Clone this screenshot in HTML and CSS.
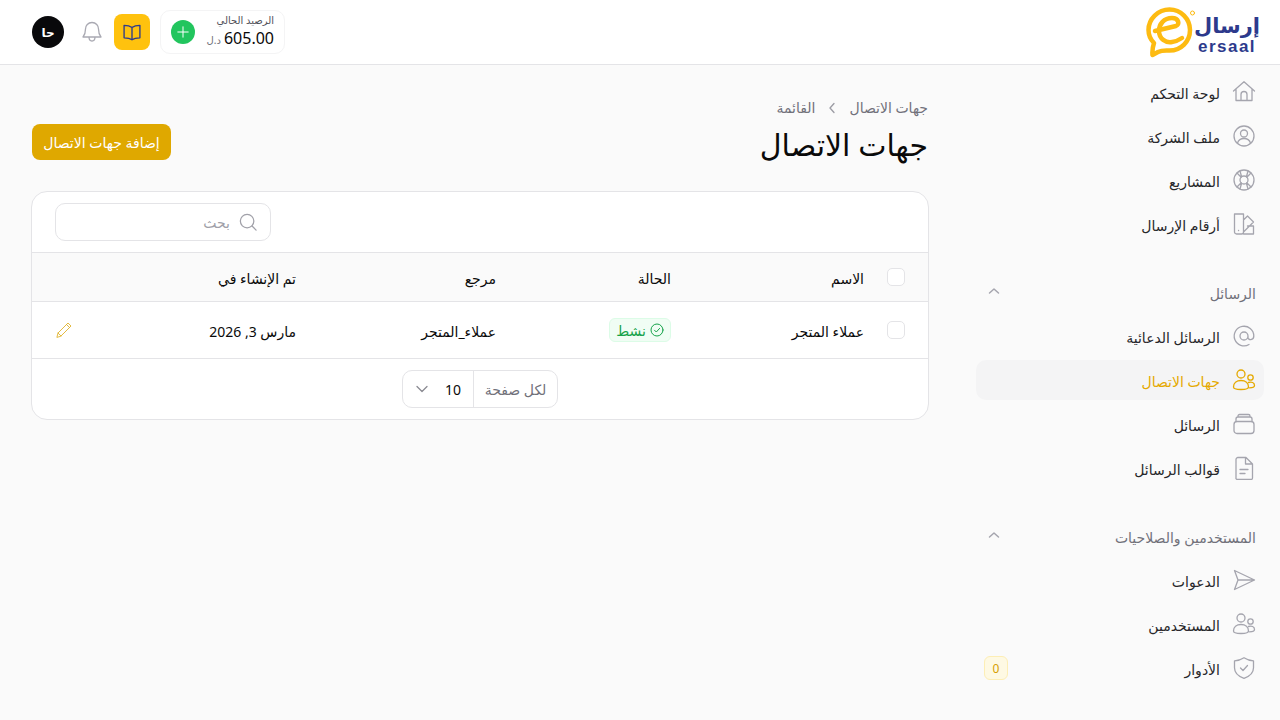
FILE: index.html
```html
<!DOCTYPE html>
<html lang="ar" dir="rtl">
  <head>
    <meta charset="UTF-8" />
    <meta name="viewport" content="width=device-width, initial-scale=1.0" />
    <title>جهات الاتصال</title>
    <link rel="stylesheet" href="styles.css">
  </head>
  <body>
    <header class="topbar">
      <div class="logo">
        <svg class="logo-mark" width="50" height="52" viewBox="0 0 50 52" fill="none" stroke="#fdbb12" stroke-linecap="round" stroke-linejoin="round">
          <path d="M8 37C4 33 2.500 29 2.500 24 2.500 13 12 3.500 23.500 3.500 35 3.500 44 13 44 24 44 35.500 35 44.500 23.500 44.500 19 44.500 16 44 12 46L6.500 49C6 44 7 40 8 37Z" stroke-width="4.500"/>
          <path d="M9 25 30 20C34 18.500 33 12 26 12 18 12 13 18 13 25 13 33 20 37 26 36 30 35.500 33 34 36 32" stroke-width="4.500"/>
          <circle cx="46.500" cy="7" r="2" stroke-width="1"/>
        </svg>
        <div class="logo-text">
          <span class="logo-ar">إرسال</span>
          <span class="logo-en">ersaal</span>
        </div>
      </div>
      <div class="top-actions">
        <div class="balance">
          <div class="balance-text">
            <div class="balance-label">الرصيد الحالي</div>
            <div class="balance-row"><span class="balance-value">605.00</span><span class="balance-cur">د.ل</span></div>
          </div>
          <span class="balance-add">
            <svg width="12" height="12" viewBox="0 0 12 12" fill="none" stroke="#fff" stroke-width="1" stroke-linecap="round"><path d="M6 .8v10.400M.8 6h10.400"/></svg>
          </span>
        </div>
        <span class="book-btn">
          <svg width="20" height="20" viewBox="0 0 24 24" fill="none" stroke="#2d3a8c" stroke-width="1.600" stroke-linecap="round" stroke-linejoin="round"><path d="M12 6.500C10 5 7 4 2.500 4v15C7 19 10 19.800 12 21.300 14 19.800 17 19 21.500 19V4C17 4 14 5 12 6.500ZM12 6.500v14.800"/></svg>
        </span>
        <svg class="bell" width="24" height="24" viewBox="0 0 24 24" fill="none" stroke="#a9a9b2" stroke-width="1.300" stroke-linecap="round" stroke-linejoin="round"><path d="M12 2.500c-4 0-6.500 3-6.500 6.500 0 4.500-.8 6-2.500 8h18c-1.700-2-2.500-3.500-2.500-8 0-3.500-2.500-6.500-6.500-6.500ZM9 17c0 2.500 1.200 4 3 4s3-1.500 3-4"/></svg>
        <span class="avatar">حا</span>
      </div>
    </header>

    <div class="layout">
      <nav class="sidebar">
        <a class="nav-item">
          <svg class="ico" viewBox="0 0 24 24"><path d="M1.500 11 12 1.800 22.500 11M4 9v11.500h16V9M9 20.500V14.500a3 3 0 0 1 6 0v6"/></svg>
          <span>لوحة التحكم</span>
        </a>
        <a class="nav-item">
          <svg class="ico" viewBox="0 0 24 24"><circle cx="12" cy="12" r="10"/><circle cx="12" cy="9.500" r="3.500"/><path d="M5.500 19c1-3 3.500-4.500 6.500-4.500s5.500 1.500 6.500 4.500"/></svg>
          <span>ملف الشركة</span>
        </a>
        <a class="nav-item">
          <svg class="ico" viewBox="0 0 24 24"><circle cx="12" cy="12" r="10"/><circle cx="12" cy="12" r="4"/><path d="M5 5l4.200 4.200M19 5l-4.200 4.200M5 19l4.200-4.200M19 19l-4.200-4.200M8 3l1.500 5.500M16 3l-1.500 5.500M8 21l1.500-5.500M16 21l-1.500-5.500"/></svg>
          <span>المشاريع</span>
        </a>
        <a class="nav-item">
          <svg class="ico" viewBox="0 0 24 24"><path d="M2.500 2h9v18a2 2 0 0 1-2 2h-5a2 2 0 0 1-2-2ZM11.500 8l4-4 6 6-10 10M11.500 22h10V14h-6M6.500 18.500h.1"/></svg>
          <span>أرقام الإرسال</span>
        </a>

        <div class="nav-head">
          <span>الرسائل</span>
          <svg class="chev" width="14" height="14" viewBox="0 0 14 14"><path d="M2.500 9 7 5l4.500 4"/></svg>
        </div>
        <a class="nav-item">
          <svg class="ico" viewBox="0 0 24 24"><path d="M16 12a4 4 0 1 1-8 0 4 4 0 0 1 8 0Zm0 0v1.500c0 3 5.800 3 5.800-1.500A9.800 9.800 0 1 0 17 20.500"/></svg>
          <span>الرسائل الدعائية</span>
        </a>
        <a class="nav-item active">
          <svg class="ico" viewBox="0 0 24 24"><circle cx="9" cy="6" r="4"/><circle cx="18.500" cy="9.500" r="2.700"/><path d="M1.500 19c0-4 3-6.500 7.500-6.500S16.500 15 16.500 19c0 1.500-2 2.500-7.500 2.500S1.500 20.500 1.500 19ZM16.500 14.500c3-.8 6-.2 6 3 0 1.500-1.500 2.200-5 2.300"/></svg>
          <span>جهات الاتصال</span>
        </a>
        <a class="nav-item">
          <svg class="ico" viewBox="0 0 24 24"><rect x="2" y="9.500" width="20" height="12" rx="3"/><path d="M4 9.500V7a2 2 0 0 1 2-2h12a2 2 0 0 1 2 2v2.500M6 5V4a1.500 1.500 0 0 1 1.500-1.500h9A1.500 1.500 0 0 1 18 4v1"/></svg>
          <span>الرسائل</span>
        </a>
        <a class="nav-item">
          <svg class="ico" viewBox="0 0 24 24"><path d="M4 3.500a2 2 0 0 1 2-2h8l6.500 6.500v14a1.500 1.500 0 0 1-1.500 1.500H5.500A1.500 1.500 0 0 1 4 21.500ZM13.500 1.500V8h7M8 13.500h8M8 17.500h5"/></svg>
          <span>قوالب الرسائل</span>
        </a>

        <div class="nav-head">
          <span>المستخدمين والصلاحيات</span>
          <svg class="chev" width="14" height="14" viewBox="0 0 14 14"><path d="M2.500 9 7 5l4.500 4"/></svg>
        </div>
        <a class="nav-item">
          <svg class="ico" viewBox="0 0 24 24"><path d="M2.500 2.500l20 9.500-20 9.500 3.500-9.500ZM6 12h16.500"/></svg>
          <span>الدعوات</span>
        </a>
        <a class="nav-item">
          <svg class="ico" viewBox="0 0 24 24"><circle cx="9" cy="6" r="4"/><circle cx="18.500" cy="9.500" r="2.700"/><path d="M1.500 19c0-4 3-6.500 7.500-6.500S16.500 15 16.500 19c0 1.500-2 2.500-7.500 2.500S1.500 20.500 1.500 19ZM16.500 14.500c3-.8 6-.2 6 3 0 1.500-1.500 2.200-5 2.300"/></svg>
          <span>المستخدمين</span>
        </a>
        <a class="nav-item">
          <svg class="ico" viewBox="0 0 24 24"><path d="M12 1.800c3 2 6 3 9.500 3v7c0 5-3.500 8.500-9.500 10.500-6-2-9.500-5.500-9.500-10.500v-7c3.500 0 6.500-1 9.500-3ZM8.500 12l2.500 2.500 4.500-5"/></svg>
          <span>الأدوار</span>
          <span class="count">0</span>
        </a>
      </nav>

      <main class="content">
        <div class="crumbs">
          <span>جهات الاتصال</span>
          <svg width="14" height="14" viewBox="0 0 14 14" fill="none" stroke="#9b9ba3" stroke-width="1.300" stroke-linecap="round" stroke-linejoin="round"><path d="M9 2.500 5 7l4 4.500"/></svg>
          <span>القائمة</span>
        </div>
        <div class="page-head">
          <h1>جهات الاتصال</h1>
          <button class="add-btn">إضافة جهات الاتصال</button>
        </div>

        <section class="card">
          <div class="toolbar">
            <div class="search">
              <svg width="18" height="18" viewBox="0 0 20 20" fill="none" stroke="#a1a1a9" stroke-width="1.400" stroke-linecap="round"><circle cx="9" cy="9" r="7.500"/><path d="m14.500 14.500 4.500 4.500"/></svg>
              <span>بحث</span>
            </div>
          </div>
          <div class="row row-head">
            <div class="c-check"><span class="check"></span></div>
            <div class="c-name">الاسم</div>
            <div class="c-status">الحالة</div>
            <div class="c-ref">مرجع</div>
            <div class="c-date">تم الإنشاء في</div>
            <div class="c-edit"></div>
          </div>
          <div class="row row-body">
            <div class="c-check"><span class="check"></span></div>
            <div class="c-name">عملاء المتجر</div>
            <div class="c-status">
              <span class="badge">
                <svg width="14" height="14" viewBox="0 0 14 14" fill="none" stroke="#16a34a" stroke-linecap="round" stroke-linejoin="round"><circle cx="7" cy="7" r="6"/><path d="m4.500 7.200 1.800 1.800 3.300-3.600"/></svg>
                نشط
              </span>
            </div>
            <div class="c-ref">عملاء_المتجر</div>
            <div class="c-date">مارس 3, 2026</div>
            <div class="c-edit">
              <svg width="16" height="16" viewBox="0 0 16 16" fill="none" stroke="#e0b32e" stroke-width=".9" stroke-linecap="round" stroke-linejoin="round"><path d="M1 15l1-4L12 1l3 3L5 14ZM2 11l3 3M10.500 2.500l3 3"/></svg>
            </div>
          </div>
          <div class="pager">
            <div class="per-page">
              <span class="per-label">لكل صفحة</span>
              <span class="per-value">10
                <svg width="14" height="14" viewBox="0 0 14 14" fill="none" stroke="#8b8b93" stroke-width="1.300" stroke-linecap="round" stroke-linejoin="round"><path d="M2 4.500 7 9.500l5-5"/></svg>
              </span>
            </div>
          </div>
        </section>
      </main>
    </div>
  </body>
</html>
```

FILE: styles.css
```css
* {
  margin: 0;
  padding: 0;
  box-sizing: border-box;
}
html,
body {
  height: 100%;
  overflow: hidden;
}
body {
  background: #fafafa;
  color: #0a0a0a;
  font-family: "Noto Sans", "DejaVu Sans", sans-serif;
  font-size: 14px;
}

/* top bar */
.topbar {
  height: 65px;
  background: #fff;
  border-bottom: 1px solid #e4e4e7;
  display: flex;
  align-items: center;
  justify-content: space-between;
  padding: 0 24px 0 32px;
}
.logo {
  display: flex;
  align-items: center;
  direction: ltr;
  gap: 2px;
}
.logo-text {
  display: flex;
  flex-direction: column;
  align-items: center;
  width: 58px;
  color: #2d3a8c;
  font-weight: 700;
  line-height: 1;
}
.logo-ar {
  font-size: 21px;
  line-height: 28px;
}
.logo-en {
  font-family: "Liberation Sans", sans-serif;
  font-size: 17px;
  line-height: 15px;
  letter-spacing: 1.500px;
}
.top-actions {
  display: flex;
  align-items: center;
}
.balance {
  width: 125px;
  height: 44px;
  background: #fff;
  border: 1px solid #f4f4f5;
  border-radius: 10px;
  display: flex;
  align-items: center;
  justify-content: space-between;
  padding: 0 10px;
}
.balance-text {
  display: flex;
  flex-direction: column;
}
.balance-label {
  font-size: 10px;
  line-height: 14px;
  color: #52525b;
}
.balance-row {
  display: flex;
  align-items: baseline;
  gap: 3px;
  line-height: 22px;
}
.balance-value {
  font-size: 16px;
}
.balance-cur {
  font-size: 10px;
  color: #71717a;
}
.balance-add {
  width: 24px;
  height: 24px;
  border-radius: 50%;
  background: #22c55e;
  display: flex;
  align-items: center;
  justify-content: center;
}
.book-btn {
  width: 36px;
  height: 36px;
  margin-right: 10px;
  border-radius: 8px;
  background: #ffc20e;
  display: flex;
  align-items: center;
  justify-content: center;
}
.bell {
  margin: 0 10px;
}
.avatar {
  width: 32px;
  height: 32px;
  margin-right: 6px;
  border-radius: 50%;
  background: #09090b;
  color: #fff;
  font-size: 12px;
  font-weight: 700;
  display: flex;
  align-items: center;
  justify-content: center;
}

/* page */
.layout {
  display: flex;
  height: 655px;
}
.sidebar {
  width: 304px;
  flex-shrink: 0;
  padding: 7px 16px 0 0;
}
.nav-item {
  height: 40px;
  margin-bottom: 4px;
  padding: 0 8px;
  border-radius: 10px;
  display: flex;
  align-items: center;
  gap: 12px;
  color: #27272a;
  font-weight: 500;
}
.nav-item span:not(.count) {
  position: relative;
  top: 1px;
}
.nav-item.active {
  background: #f4f4f5;
  color: #e5a900;
}
.ico {
  width: 24px;
  height: 24px;
  flex-shrink: 0;
  fill: none;
  stroke: #a5a5ae;
  stroke-width: 1.300;
  stroke-linecap: round;
  stroke-linejoin: round;
}
.active .ico {
  stroke: #e5a900;
}
.count {
  margin-right: auto;
  width: 24px;
  height: 24px;
  border: 1px solid #fdeeb5;
  border-radius: 6px;
  background: #fef9e3;
  color: #d69e00;
  font-size: 12px;
  font-weight: 400;
  display: flex;
  align-items: center;
  justify-content: center;
}
.nav-head {
  height: 48px;
  margin-top: 22px;
  margin-bottom: 2px;
  padding: 0 8px 0 11px;
  display: flex;
  align-items: center;
  justify-content: space-between;
  color: #71717a;
}
.nav-head span {
  position: relative;
  top: 3px;
}
.chev {
  position: relative;
  top: 1px;
  fill: none;
  stroke: #a5a5ae;
  stroke-width: 1.500;
  stroke-linecap: round;
  stroke-linejoin: round;
}

/* main */
.content {
  flex: 1;
  padding: 33px 48px 0 32px;
}
.crumbs {
  display: flex;
  align-items: center;
  gap: 10px;
  color: #71717a;
  line-height: 20px;
}
.page-head {
  display: flex;
  align-items: flex-start;
  justify-content: space-between;
  margin-top: 6px;
  height: 67px;
}
h1 {
  font-size: 30px;
  font-weight: 500;
  line-height: 44px;
  position: relative;
  top: -1px;
}
.add-btn {
  height: 36px;
  width: 139px;
  border: 0;
  border-radius: 8px;
  background: #dfa800;
  color: #fff;
  font: inherit;
  font-weight: 500;
}
.card {
  margin: 0 -1px;
  background: #fff;
  border: 1px solid #e4e4e7;
  border-radius: 16px;
}
.toolbar {
  height: 61px;
  padding: 11px 23px;
  display: flex;
  justify-content: flex-end;
  border-bottom: 1px solid #e4e4e7;
}
.search {
  width: 216px;
  height: 38px;
  border: 1px solid #e4e4e7;
  border-radius: 10px;
  padding: 0 13px 0 10px;
  display: flex;
  align-items: center;
  gap: 9px;
  color: #9f9fa9;
}
.row {
  display: flex;
  align-items: center;
  border-bottom: 1px solid #e4e4e7;
}
.row-head {
  height: 49px;
  background: #fafafa;
  font-weight: 500;
}
.row-body {
  height: 57px;
}
.row-head > div:not(.c-check),
.c-name,
.c-ref,
.c-date {
  position: relative;
  top: 1px;
}
.c-check {
  width: 64px;
  flex-shrink: 0;
  padding-right: 23px;
  display: flex;
}
.c-name {
  width: 193px;
}
.c-status {
  width: 175px;
}
.c-ref {
  width: 200px;
}
.c-date {
  width: 200px;
}
.c-edit {
  flex: 1;
  padding-left: 24px;
  display: flex;
  justify-content: flex-end;
}
.check {
  width: 18px;
  height: 18px;
  border: 1px solid #e4e4e7;
  border-radius: 5px;
  background: #fff;
}
.badge {
  display: inline-flex;
  align-items: center;
  gap: 4px;
  height: 24px;
  padding: 0 6px;
  border: 1px solid #dcfce7;
  border-radius: 6px;
  background: #f0fdf4;
  color: #16a34a;
}
.pager {
  height: 60px;
  display: flex;
  align-items: center;
  justify-content: center;
}
.per-page {
  width: 156px;
  height: 38px;
  border: 1px solid #e4e4e7;
  border-radius: 10px;
  display: flex;
  align-items: stretch;
}
.per-label {
  width: 84px;
  border-left: 1px solid #e4e4e7;
  color: #71717a;
  display: flex;
  align-items: center;
  justify-content: center;
}
.per-value {
  flex: 1;
  padding: 0 12px;
  display: flex;
  align-items: center;
  justify-content: space-between;
}
```
